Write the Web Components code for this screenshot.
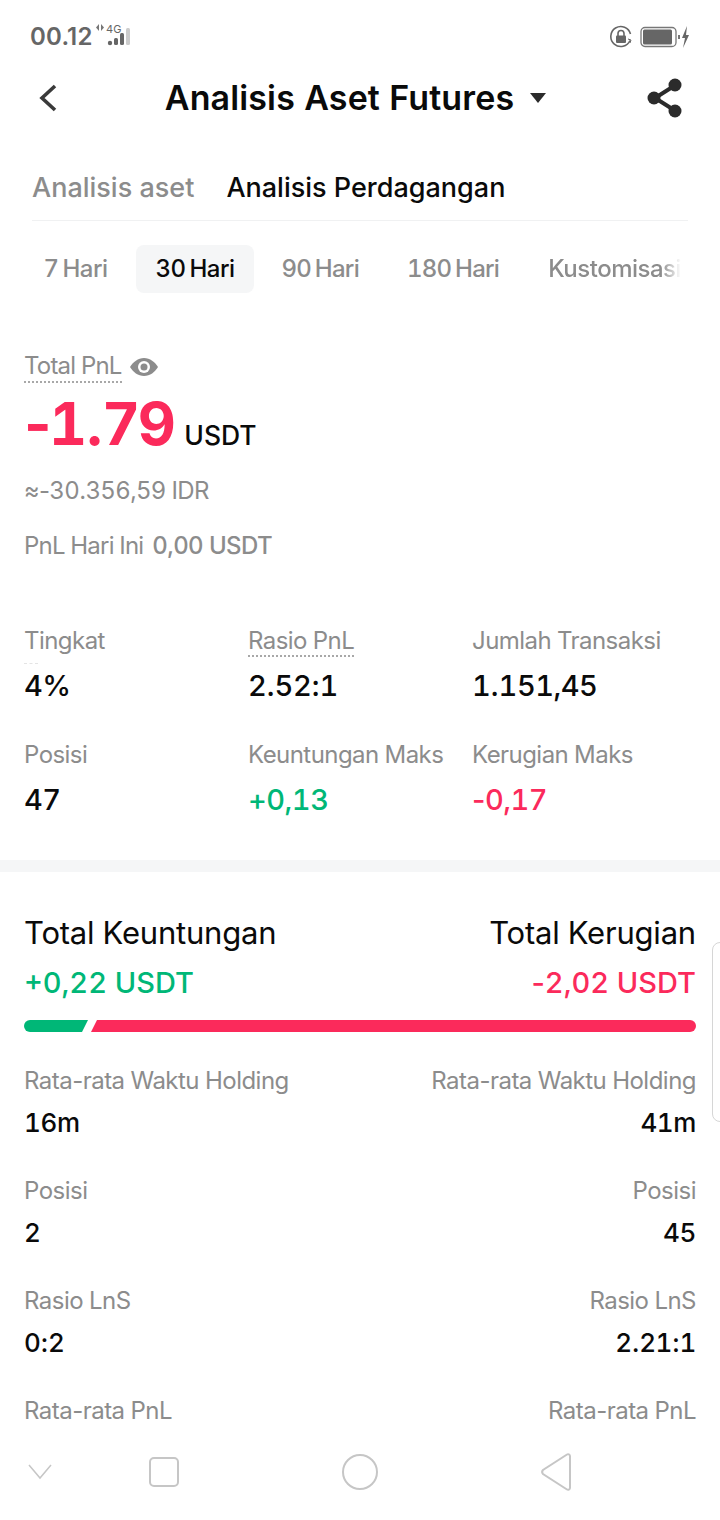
<!DOCTYPE html>
<html lang="id"><head><meta charset="utf-8"><title>Analisis Aset Futures</title>
<style>
html,body{margin:0;padding:0;background:#fff}
body{width:720px;height:1520px;overflow:hidden;font-family:Inter,"Noto Sans",sans-serif;color:#0a0a0a}
</style></head><body>
<app-screen></app-screen>
<script>
const base='<style>*{font-variant-numeric:tabular-nums!important}.p{font-variant-numeric:normal!important}</style>';
const def=(name,html,render)=>{customElements.define(name,class extends HTMLElement{connectedCallback(){if(this.shadowRoot)return;const s=this.attachShadow({mode:'open'});s.innerHTML=base+(render?render(this):html);}})};
const a=(e,n,d='')=>e.getAttribute(n)??d;
const fmt=t=>t.replace(/[-:.]/g,m=>`<span class="p">${m}</span>`);

def('status-bar',`<style>
:host{display:flex;align-items:center;height:74px;padding:0 30px 0 30px;box-sizing:border-box;color:#666}
.t{font:600 24px/30px Inter,sans-serif;letter-spacing:.2px;font-variant-numeric:normal!important}
.net{margin-left:3px;margin-top:-3px}
.sp{flex:1}
</style>
<span class="t">00.12</span>
<svg class="net" width="38" height="26" viewBox="0 0 38 26"><path d="M3 1v7L0 4.500zM5 1v7l3-3.500z" fill="#777"/><text x="10" y="10" font-family="Inter" font-size="11" fill="#666">4G</text><circle cx="14" cy="20" r="2.200" fill="#666"/><rect x="18" y="15" width="4" height="7" rx="1.500" fill="#666"/><rect x="24" y="10" width="4" height="12" rx="1.500" fill="#666"/><rect x="30" y="5" width="4" height="17" rx="1.500" fill="#ccc"/></svg>
<span class="sp"></span>
<svg width="24" height="24" viewBox="0 0 24 24" style="margin-right:7px"><path d="M21 15.500A10 10 0 1 1 21.500 9" fill="none" stroke="#666" stroke-width="1.600"/><path d="M19 14l3 1-1 3" fill="none" stroke="#666" stroke-width="1"/><rect x="7" y="10.500" width="10" height="7.500" rx="1" fill="#666"/><path d="M9 11V8.500a3 3 0 0 1 6 0V11" fill="none" stroke="#666" stroke-width="1.600"/></svg>
<svg width="50" height="24" viewBox="0 0 50 24"><rect x="1" y="2.500" width="35" height="19" rx="4" fill="none" stroke="#777" stroke-width="1.300"/><rect x="3" y="4.500" width="29" height="15" rx="1.500" fill="#666"/><rect x="38" y="10" width="2" height="4" fill="#777"/><path d="M47 1l-5 12h3l-2 10 6-13h-3z" fill="#666"/></svg>`);

def('app-header',`<style>
:host{display:flex;align-items:center;height:48px;padding:0 36px 0 38px;position:relative}
.c{flex:1;display:flex;justify-content:center;align-items:center;gap:16px;padding-left:7px;font:600 34px/48px Inter,sans-serif;letter-spacing:.13px;color:#0a0a0a}
</style>
<svg width="20" height="28" viewBox="0 0 20 28"><path d="M17 2L4 14l13 12" fill="none" stroke="#3a3a3a" stroke-width="3.600"/></svg>
<div class="c"><span>Analisis Aset Futures</span><svg width="16" height="10" viewBox="0 0 16 10"><path d="M0 0h16L8 10z" fill="#2b2b2b"/></svg></div>
<svg width="38" height="40" viewBox="0 0 38 40"><path d="M28 8L9 20l19 12" fill="none" stroke="#2b2b2b" stroke-width="4"/><circle cx="29" cy="7" r="6.500" fill="#2b2b2b"/><circle cx="8" cy="20" r="6.500" fill="#2b2b2b"/><circle cx="29" cy="33" r="6.500" fill="#2b2b2b"/></svg>`);

def('top-tabs',`<style>
:host{display:flex;gap:32px;margin:28px 32px 0;height:71px;padding-top:5px;align-items:center;border-bottom:1px solid #f0f1f2;box-sizing:border-box;font:500 27px/34px Inter,sans-serif;color:#0a0a0a}
.off{color:#8c8c8c;font-weight:500}
span{white-space:nowrap}
</style><span class="off">Analisis aset</span><span>Analisis Perdagangan</span>`);

def('period-tabs',`<style>
:host{display:flex;height:48px;margin-top:24px;padding-left:24px;overflow:hidden;font:500 24px/48px Inter,sans-serif;color:#8c8c8c;white-space:nowrap;letter-spacing:-.5px;word-spacing:-2px}
span{display:block}
.on{background:#f5f6f7;color:#0a0a0a;border-radius:8px;width:118px;text-align:center}
.n{letter-spacing:-.75px}
.k{-webkit-mask-image:linear-gradient(90deg,#000 85%,transparent 100%)}
</style>
<span style="width:104px;padding-left:19.500px;box-sizing:border-box;margin-right:8px">7 Hari</span><span class="on">30 Hari</span><span class="n" style="margin-left:27.500px">90 Hari</span><span class="n" style="margin-left:48px">180 Hari</span><span class="k" style="margin-left:49px">Kustomisasi</span>`);

def('pnl-summary',`<style>
:host{display:block;padding:0 24px;margin-top:55px}
.l{display:flex;align-items:center;gap:8px;height:38px;font:400 24px/30px Inter,sans-serif;color:#8c8c8c;letter-spacing:-.8px}
.l span{border-bottom:2px dotted #a8a8a8;line-height:30px}
.v{display:flex;align-items:baseline;height:62px;margin-top:7px;line-height:62px}
.n{font:700 59px/62px Inter,sans-serif;color:#fb2a5b;letter-spacing:-2.500px}
.u{font:500 26.500px/30px Inter,sans-serif;margin-left:11px;color:#0a0a0a}
.idr{font:400 24px/30px Inter,sans-serif;color:#8c8c8c;margin-top:21px;letter-spacing:-.65px}
.t{display:flex;gap:9px;margin-top:25px;font:400 24px/30px Inter,sans-serif;color:#8c8c8c;letter-spacing:-.8px}
.t b{font-weight:500;letter-spacing:-.6px}
</style>
<div class="l"><span>Total PnL</span><svg width="28" height="20" viewBox="0 0 28 20"><path d="M14 1C8 1 3 5 0 10c3 5 8 9 14 9s11-4 14-9c-3-5-8-9-14-9z" fill="#8c8c8c"/><circle cx="14" cy="10" r="6" fill="#fff"/><circle cx="14" cy="10" r="3.500" fill="#8c8c8c"/></svg></div>
<div class="v"><span class="n">${fmt('-1.79')}</span><span class="u">USDT</span></div>
<div class="idr">≈${fmt('-30.356,59 IDR')}</div>
<div class="t">PnL Hari Ini <b>0,00 USDT</b></div>`);

def('stat-cell',null,e=>`<style>
:host{display:block;height:114px;min-width:0;white-space:nowrap;position:relative}
.l{font:400 24px/34px Inter,sans-serif;color:#8c8c8c;letter-spacing:-.55px;height:35px}
.l span{display:inline-block;height:31px}
.d span{border-bottom:2px dotted #a8a8a8}
.f{position:absolute;left:0;top:39px;width:14px;border-top:1px dashed #e4e4e4}
.v{font:450 29px/40px Inter,sans-serif;letter-spacing:-.5px;color:${a(e,'color','#0a0a0a')};margin-top:7px}
</style><div class="l ${e.hasAttribute('dotted')?'d':''}"><span>${a(e,'label')}</span></div>${e.hasAttribute('faint')?'<div class="f"></div>':''}<div class="v">${fmt(a(e,'value'))}</div>`);

def('stat-grid',`<style>
:host{display:grid;grid-template-columns:224px 224px 1fr;padding:0 0 0 24px;margin-top:63px;height:228px}
</style><slot></slot>`);

def('section-gap',`<style>:host{display:block;height:12px;background:#f5f6f7;margin-top:8px}</style>`);

def('split-bar',`<style>
:host{display:flex;height:12px;margin:17px 24px 0}
.g{width:64px;background:#00b777;border-radius:6px 0 0 6px;clip-path:polygon(0 0,100% 0,calc(100% - 6px) 100%,0 100%)}
.r{flex:1;margin-left:3px;background:#fb2a5b;border-radius:0 6px 6px 0;clip-path:polygon(6px 0,100% 0,100% 100%,0 100%)}
</style><div class="g"></div><div class="r"></div>`);

def('pl-heading',`<style>
:host{display:flex;justify-content:space-between;padding:0 24px;margin-top:41px}
.right{text-align:right}
.h{font:400 31px/40px Inter,sans-serif;color:#0a0a0a;letter-spacing:-.2px}
.v{font:500 29px/40px Inter,sans-serif;margin-top:10px}
</style>
<div><div class="h">Total Keuntungan</div><div class="v" style="color:#00b777">+0,22 USDT</div></div>
<div class="right"><div class="h">Total Kerugian</div><div class="v" style="color:#fb2a5b">${fmt('-2,02 USDT')}</div></div>`);

def('pair-row',null,e=>`<style>
:host{display:flex;justify-content:space-between;padding:0 24px;height:110px;box-sizing:border-box;font-family:Inter,sans-serif;white-space:nowrap}
.right{text-align:right}
.l{font:400 24px/32px Inter,sans-serif;color:#8c8c8c;letter-spacing:-.52px}
.v{font:450 26px/36px Inter,sans-serif;letter-spacing:-.4px;color:#0a0a0a;margin-top:8px}
</style><div><div class="l">${fmt(a(e,'label'))}</div><div class="v">${fmt(a(e,'left'))}</div></div><div class="right"><div class="l">${fmt(a(e,'label'))}</div><div class="v">${fmt(a(e,'right'))}</div></div>`);

def('nav-bar',`<style>
:host{position:absolute;left:0;right:0;bottom:0;height:90px;background:#fff;display:block}
svg{position:absolute;left:0;top:0}
</style><svg width="720" height="90" viewBox="0 0 720 90"><g transform="translate(0,10)" fill="none" stroke="#c6c6c6" stroke-width="2"><path d="M29 25l11 13 11-13" stroke-width="1.500"/><rect x="150" y="18" width="28" height="28" rx="4"/><ellipse cx="360" cy="32" rx="17" ry="17"/><path d="M570 16v32a2 2 0 0 1-3 1.500L543 34a3 3 0 0 1 0-4l24-15.500a2 2 0 0 1 3 1.500z"/></g></svg>`);

def('side-handle',`<style>:host{position:absolute;left:712px;top:942px;width:20px;height:180px;box-sizing:border-box;border:1px solid #d6d6d6;border-radius:8px;background:#fff}</style>`);

def('pair-list',`<style>:host{display:block;margin-top:33px}</style>
<pair-row label="Rata-rata Waktu Holding" left="16m" right="41m"></pair-row>
<pair-row label="Posisi" left="2" right="45"></pair-row>
<pair-row label="Rasio LnS" left="0:2" right="2.21:1"></pair-row>
<pair-row label="Rata-rata PnL" left="" right=""></pair-row>`);

def('app-screen',`<style>:host{display:block;position:relative;width:720px;height:1520px;overflow:hidden;background:#fff}</style>
<status-bar></status-bar><app-header></app-header><top-tabs></top-tabs><period-tabs></period-tabs><pnl-summary></pnl-summary>
<stat-grid>
<stat-cell label="Tingkat" value="4%" faint></stat-cell><stat-cell label="Rasio PnL" value="2.52:1" dotted></stat-cell><stat-cell label="Jumlah Transaksi" value="1.151,45"></stat-cell>
<stat-cell label="Posisi" value="47"></stat-cell><stat-cell label="Keuntungan Maks" value="+0,13" color="#00b777"></stat-cell><stat-cell label="Kerugian Maks" value="-0,17" color="#fb2a5b"></stat-cell>
</stat-grid>
<section-gap></section-gap><pl-heading></pl-heading><split-bar></split-bar>
<pair-list></pair-list>
<side-handle></side-handle><nav-bar></nav-bar>`);
</script>
</body></html>
